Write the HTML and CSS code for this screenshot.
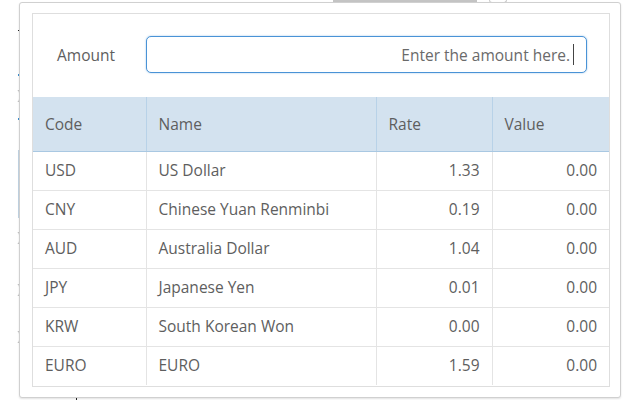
FILE: index.html
```html
<!DOCTYPE html>
<html lang="en">
<head>
<meta charset="utf-8">
<title>Currency Converter</title>
<link rel="stylesheet" href="styles.css">
</head>
<body>
<div class="backdrop">
  <span class="mark mark-dash"></span>
  <span class="mark mark-blue b1"></span>
  <span class="mark mark-blue b2"></span>
  <span class="mark mark-paren p1"></span>
  <span class="mark mark-vline"></span>
  <span class="mark mark-paren p2"></span>
  <span class="mark mark-paren p3"></span>
  <span class="mark mark-paren p4"></span>
  <span class="mark mark-topbar"></span>
  <span class="mark mark-corner"></span>
  <span class="mark mark-tick"></span>
</div>
<div class="popup">
  <div class="panel">
    <div class="amount-row">
      <label class="amount-label" for="amount">Amount</label>
      <div class="amount-field">
        <input id="amount" class="amount-input" type="text" placeholder="Enter the amount here.">
        <span class="caret"></span>
      </div>
    </div>
    <table class="rates">
      <colgroup>
        <col class="c-code"><col class="c-name"><col class="c-rate"><col class="c-value">
      </colgroup>
      <thead>
        <tr><th>Code</th><th>Name</th><th>Rate</th><th>Value</th></tr>
      </thead>
      <tbody>
        <tr><td>USD</td><td>US Dollar</td><td class="num">1.33</td><td class="num">0.00</td></tr>
        <tr><td>CNY</td><td>Chinese Yuan Renminbi</td><td class="num">0.19</td><td class="num">0.00</td></tr>
        <tr><td>AUD</td><td>Australia Dollar</td><td class="num">1.04</td><td class="num">0.00</td></tr>
        <tr><td>JPY</td><td>Japanese Yen</td><td class="num">0.01</td><td class="num">0.00</td></tr>
        <tr><td>KRW</td><td>South Korean Won</td><td class="num">0.00</td><td class="num">0.00</td></tr>
        <tr><td>EURO</td><td>EURO</td><td class="num">1.59</td><td class="num">0.00</td></tr>
      </tbody>
    </table>
  </div>
</div>
</body>
</html>
```
FILE: styles.css
```css
* { box-sizing: border-box; }
html, body {
  margin: 0;
  padding: 0;
  background: #ffffff;
}
body {
  width: 640px;
  height: 400px;
  overflow: hidden;
  position: relative;
  padding: 2px 0 0 19px;
  font-family: "Open Sans", "Noto Sans", sans-serif;
  font-size: 15.5px;
  color: #5e5e5e;
}

/* background page fragments peeking around the popup */
.backdrop { position: absolute; inset: 0; z-index: 0; }
.mark { position: absolute; display: block; }
.mark-dash { left: 18px; top: 30px; width: 2px; height: 1px; background: #222; }
.mark-blue { left: 18px; width: 2px; height: 2px; background: #3b8fd0; }
.b1 { top: 74px; }
.b2 { top: 118px; }
.mark-paren { left: 17px; width: 3px; height: 12px; border-right: 1px solid #888; border-radius: 0 4px 4px 0; }
.p1 { top: 90px; }
.p2 { top: 232px; }
.p3 { top: 284px; }
.p4 { top: 331px; }
.mark-vline { left: 18px; top: 150px; width: 1px; height: 68px; background: #c4d6e6; }
.mark-topbar { left: 333px; top: 0; width: 144px; height: 2px; background: #c4c4c4; }
.mark-corner { left: 489px; top: 0; width: 18px; height: 3px; border: 1px solid #cccccc; border-top: 0; border-radius: 0 0 4px 4px; }
.mark-tick { left: 76px; top: 397px; width: 1px; height: 3px; background: #222; }

.popup {
  position: relative;
  z-index: 1;
  width: 602px;
  height: 396px;
  background: #ffffff;
  border: 1px solid #d0d0d0;
  border-radius: 3px;
  box-shadow: 0 1px 2px rgba(0, 0, 0, 0.12);
  padding: 10px 10px 10px 12px;
}

.panel {
  width: 578px;
  height: 374px;
  border: 1px solid #dedede;
  display: flex;
  flex-direction: column;
}

.amount-row {
  height: 83px;
  display: flex;
  align-items: center;
  padding: 0 22px 2px 24px;
}
.amount-label {
  width: 89px;
  flex: none;
}
.amount-field {
  position: relative;
  flex: 1;
  height: 37px;
}
.amount-input {
  width: 100%;
  height: 100%;
  border: 1px solid #4a93d6;
  border-radius: 5px;
  box-shadow: 0 0 2px rgba(74, 147, 214, 0.55);
  outline: none;
  padding: 0 16px 0 10px;
  text-align: right;
  font-family: inherit;
  font-size: 15.5px;
  color: #5e5e5e;
  background: #ffffff;
}
.amount-input::placeholder {
  color: #6a6a6a;
  opacity: 1;
}
.caret {
  position: absolute;
  right: 13px;
  top: 8px;
  width: 1px;
  height: 21px;
  background: #444444;
}

.rates {
  width: 100%;
  border-collapse: collapse;
  table-layout: fixed;
}
.c-code { width: 113px; }
.c-name { width: 230px; }
.c-rate { width: 116px; }
.c-value { width: 117px; }

.rates th {
  height: 54px;
  background: #d3e2ef;
  font-weight: normal;
  text-align: left;
  padding: 0 12px;
  border-bottom: 1px solid #a9c8e2;
  border-left: 1px solid #b8d2e8;
}
.rates td {
  height: 39px;
  padding: 0 12px 1px;
  border-bottom: 1px solid #e4e4e4;
  border-left: 1px solid #e4e4e4;
  white-space: nowrap;
}
.rates th:first-child,
.rates td:first-child { border-left: 0; }
.rates tbody tr:last-child td { border-bottom: 0; }
.rates .num { text-align: right; }
```
